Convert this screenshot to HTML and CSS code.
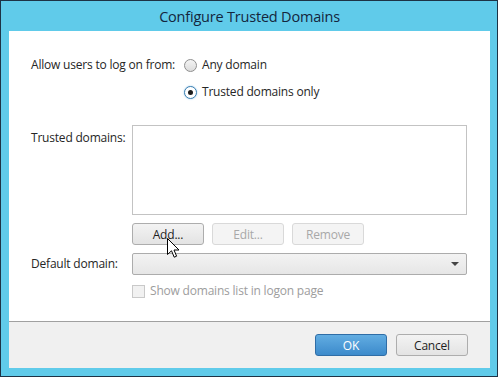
FILE: index.html
```html
<!DOCTYPE html>
<html lang="en">
<head>
  <meta charset="UTF-8">
  <title>Configure Trusted Domains</title>
  <link rel="stylesheet" href="styles.css">
</head>
<body>

  <div class="window">
    <div class="title-bar">Configure Trusted Domains</div>

    <div class="content">
      <div class="logon-row">
        <span class="label logon-label">Allow users to log on from:</span>
        <div class="radio-group">
          <label class="radio"><span class="radio-dot"></span>Any domain</label>
          <label class="radio"><span class="radio-dot checked"></span>Trusted domains only</label>
        </div>
      </div>

      <div class="field-row domains-row">
        <span class="label">Trusted domains:</span>
        <div class="field">
          <div class="listbox"></div>
          <div class="list-actions">
            <button class="btn add-btn">Add...</button>
            <button class="btn" disabled>Edit...</button>
            <button class="btn" disabled>Remove</button>
          </div>
        </div>
      </div>

      <div class="field-row default-row">
        <span class="label">Default domain:</span>
        <div class="field">
          <div class="dropdown"><span class="arrow"></span></div>
        </div>
      </div>

      <div class="field-row check-row">
        <span class="label"></span>
        <label class="check disabled"><span class="check-box"></span>Show domains list in logon page</label>
      </div>
    </div>

    <div class="footer">
      <button class="btn primary">OK</button>
      <button class="btn">Cancel</button>
    </div>

    <!-- mouse pointer over the Add button -->
    <svg class="cursor" width="13" height="21" viewBox="0 0 13 21">
      <path d="M0.5 0.5 L0.5 16.5 L4.5 12.8 L7.2 19.2 L9.6 18.2 L7 12 L12 12 Z" fill="#fff" stroke="#000" stroke-width="1" stroke-linejoin="miter"/>
    </svg>
  </div>

</body>
</html>
```

FILE: styles.css
```css
* {
  box-sizing: border-box;
}
body {
  margin: 0;
  font-family: 'Open Sans', 'Noto Sans', sans-serif;
  font-size: 12px;
  letter-spacing: -0.2px;
  color: #262626;
  background: #1d3346;
}
.window {
  position: relative;
  width: 498px;
  height: 377px;
  border: 1px solid #1d3346;
  background: #60cbea;
  padding: 0 7px 8px 8px;
  display: flex;
  flex-direction: column;
}
.title-bar {
  height: 30px;
  line-height: 31px;
  text-align: center;
  font-size: 14.5px;
  color: #14263d;
}
.content {
  height: 290px;
  background: #fff;
  padding: 25px 0 0 22px;
}
.label {
  width: 101px;
  flex-shrink: 0;
  line-height: 18px;
}
.logon-row {
  display: flex;
}
.logon-label {
  width: 153px;
}
.radio-group {
  display: flex;
  flex-direction: column;
  gap: 9px;
}
.radio, .check {
  display: flex;
  align-items: center;
  line-height: 18px;
  gap: 5px;
}
.radio-dot {
  width: 13px;
  height: 13px;
  border-radius: 50%;
  border: 1px solid #8f8f8f;
  background: linear-gradient(#f4f4f4, #dcdcdc);
  position: relative;
}
.radio-dot.checked {
  border-color: #3c7fb1;
  background: #fff;
  box-shadow: 0 0 2px #9ccbec;
}
.radio-dot.checked::after {
  content: "";
  position: absolute;
  left: 3px;
  top: 3px;
  width: 5px;
  height: 5px;
  border-radius: 50%;
  background: #1e1e1e;
}
.field-row {
  display: flex;
}
.domains-row {
  margin-top: 24px;
}
.domains-row .label {
  padding-top: 4px;
}
.field {
  display: flex;
  flex-direction: column;
  gap: 8px;
}
.listbox {
  width: 335px;
  height: 90px;
  border: 1px solid #c3c3c3;
  background: #fff;
}
.list-actions {
  display: flex;
  gap: 8px;
}
.btn {
  width: 72px;
  height: 22px;
  padding: 0;
  font-family: inherit;
  font-size: 12px;
  letter-spacing: -0.2px;
  color: #1e1e1e;
  border: 1px solid #adadad;
  border-radius: 3px;
  background: linear-gradient(#f3f3f3, #e3e3e3);
}
.btn:disabled {
  color: #a8a8a8;
  border-color: #d9d9d9;
  background: #f4f4f4;
}
.default-row {
  margin-top: 8px;
  align-items: center;
}
.dropdown {
  position: relative;
  width: 335px;
  height: 22px;
  border: 1px solid #acacac;
  border-radius: 2px;
  background: linear-gradient(#f3f3f3, #e6e6e6);
}
.arrow {
  position: absolute;
  right: 7px;
  top: 8px;
  border-left: 4px solid transparent;
  border-right: 4px solid transparent;
  border-top: 4px solid #444;
}
.check-row {
  margin-top: 7px;
}
.check.disabled {
  color: #9d9d9d;
}
.check-box {
  width: 13px;
  height: 13px;
  border: 1px solid #c9c9c9;
  background: #f1f1f1;
}
.footer {
  flex: 1;
  border-top: 1px solid #a0a0a0;
  background: #f0f0f0;
  display: flex;
  justify-content: flex-end;
  align-items: flex-start;
  gap: 9px;
  padding: 12px 22px 0 0;
}
.btn.primary {
  color: #fff;
  border-color: #2f6da6;
  background: linear-gradient(#62ade2, #3c8acb);
}
.cursor {
  position: absolute;
  left: 166px;
  top: 237px;
}
```
